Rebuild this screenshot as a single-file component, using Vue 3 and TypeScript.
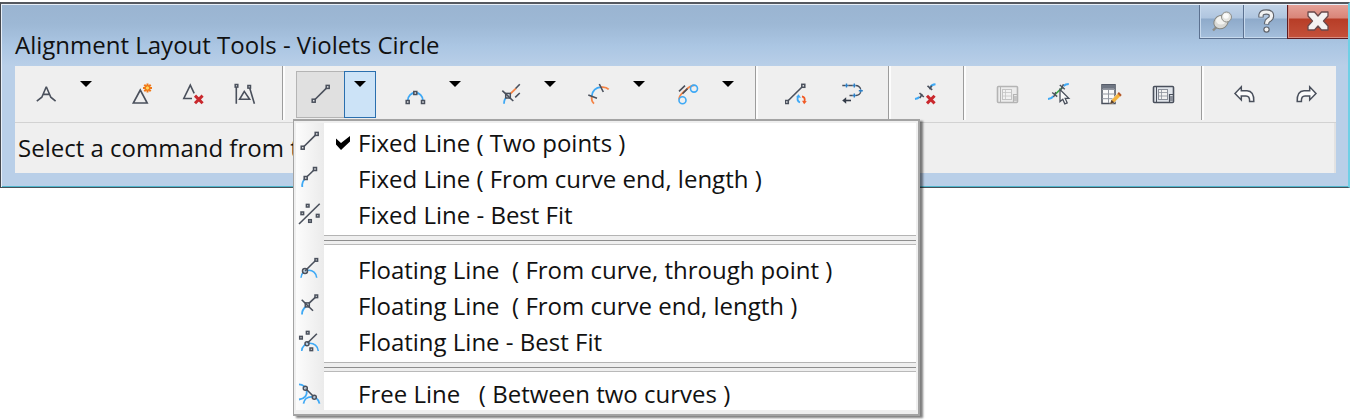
<script setup lang="ts">
import { ref } from 'vue'

interface Tool {
  icon: string
  label: string
  split?: boolean
  wide?: boolean
  menu?: boolean
  disabled?: boolean
}

interface Group {
  name: string
  tools: Tool[]
}

const ink = '#4a505c'
const blue = '#3fa9f5'
const orange = '#f58345'

const box = (x: number, y: number, s = 3) =>
  `<rect x="${x - s / 2}" y="${y - s / 2}" width="${s}" height="${s}" fill="#dfe1e4" stroke="${ink}" stroke-width="1.5"/>`
const dot = (x: number, y: number, r = 2) =>
  `<circle cx="${x}" cy="${y}" r="${r}" fill="#dfe1e4" fill-opacity="0.7" stroke="${ink}" stroke-width="1.5"/>`
const line = (d: string, color = ink, w = 1.6) =>
  `<path d="${d}" fill="none" stroke="${color}" stroke-width="${w}"/>`
const cross = (x: number, y: number) =>
  line(`M${x - 3.8} ${y - 3.8}L${x + 3.8} ${y + 3.8}M${x + 3.8} ${y - 3.8}L${x - 3.8} ${y + 3.8}`, '#c9282d', 3)

const sheet = (c: string, fill: string, inner: string) =>
  `<rect x="2.5" y="4.5" width="20" height="16" rx="1" fill="${fill}" stroke="${c}" stroke-width="1.6"/>` +
  `<path d="M5.5 5v15" stroke="${c}" stroke-width="1"/>` +
  `<rect x="7.5" y="7.5" width="9" height="10" fill="#f2f2f2" stroke="${inner}"/>` +
  `<path d="M7.5 10.5h9M7.5 14h9M10.5 7.5v10" stroke="${inner}" stroke-width="0.8"/>` +
  `<path d="M18.5 20v-7.5h4" fill="none" stroke="${c}" stroke-width="1.2"/><rect x="19" y="14" width="3" height="5" fill="${inner}"/>`

const undoPath =
  'M2 11.5L8.3 4.8V8.8H14C19 9 21 12 20.8 19.4H16.6C16.8 15.5 15.5 14 13 14H8.3V18Z'

const icons: Record<string, string> = {
  tangent: line('M12.3 4.8L7.8 15.2L2.8 19.2M12.3 4.8L16.8 15.2L21.6 19.2M9.2 12.4H15.4'),
  insertPi:
    line('M10.3 8L3.3 21H17.2Z') +
    `<path d="M17.5 1.5v9M13 6h9M14.3 2.8l6.4 6.4M20.7 2.8l-6.4 6.4" stroke="#f07818" stroke-width="2"/><circle cx="17.5" cy="6" r="2.1" fill="#ffd65a" stroke="#f07818"/>`,
  deletePi: line('M11 16.5H2.8L9.3 3.2L13.2 11.4') + cross(17.8, 17.4),
  breakPi:
    line('M4.3 4V21.8M17.4 5L22.4 21.8') + line('M12.3 9.4L7.6 17.3H17.6Z') + box(4.5, 3.8, 2.6) + box(17.2, 4.8, 2.6),
  line: line('M4.7 18.7L18.7 4.9') + box(4.7, 18.7) + box(18.7, 4.9),
  curve: line('M4.7 19C4.7 8 20 8 20 19', blue, 1.8) + box(4.7, 20) + box(12.3, 11) + box(20, 20),
  floatCurve:
    line('M10 14L18 6.3', orange, 1.8) + line('M17.6 6.5L21.8 2.2M17.2 15.4L21.8 11') +
    line('M9 15Q6 17 6 21.7', blue, 1.8) + box(10, 13.7, 4.6) + line('M4.3 8.7L15.3 19'),
  spiral:
    line('M4.8 14C5.5 9 9 5.5 14 5.2', blue, 1.8) + line('M14 5.2Q19 4.5 21.7 7.4M4.8 14Q4 19 7 21.7', orange, 1.8) +
    line('M1.3 13L10 16.3M12.3 2L16.3 10'),
  reverse:
    line('M3 17.5C3 13 6 11.5 9 8.7C12 5.8 14 3.5 18.4 3.4', orange, 1.8) + line('M6.5 11.8L11.5 6.6M3 9.3L9 3.6') +
    `<circle cx="6.5" cy="18.2" r="3.5" fill="none" stroke="${blue}" stroke-width="1.6"/><circle cx="18" cy="6.6" r="3.5" fill="none" stroke="${blue}" stroke-width="1.6"/>`,
  convert:
    line('M1.8 20L18.3 3.8') + box(1.8, 20) + box(18.3, 3.8) +
    line('M15 20.5Q11.5 19 13 14.8', blue, 1.8) + `<path d="M11 15.2l2.5-3 2.5 3.6z" fill="${blue}"/>` +
    line('M17 14.5Q20.5 15 19.5 19.5', '#f15a24', 1.8) + `<path d="M17 18.8l2.2 3.4 2.6-3z" fill="#f15a24"/>`,
  traverse:
    line('M2.3 3.5H5M8.2 3.5H12.8M15.6 3.5Q19.8 3.7 20.6 7.2M20.6 10.2Q19.8 13.3 16 13.5M12.8 13.5H9.5', ink, 1.4) +
    line('M5 3.5H8.2M12.8 3.5H15.6M12.8 13.5H16M20.7 7.2V10.2M6.5 1.5V5.5M14.3 1.5V5.5M18.8 8.7H22.8M14.3 11.5V15.5', '#2f7fc4', 1.4) +
    line('M5 18.5H11', '#343b48', 1.6) + '<path d="M2.2 18.5L6.2 15.3V21.7Z" fill="#343b48"/>',
  deleteSub:
    line('M1 17Q4 16.7 5.5 15M16.5 5Q17.5 2.5 21.5 2.2', blue, 2) +
    line('M5.5 11L9.8 15M8.2 12L5.8 16M13.5 3.8L18.2 7.8M17.8 3.8L15.5 7.2', ink, 1.6) + cross(16.8, 17.6),
  gridOff: sheet('#b4b4b4', '#ececec', '#c4c4c4'),
  pick:
    line('M1 17Q4.5 16.8 6.5 14M16.5 4Q18.5 2 21.8 2', blue, 2) + line('M7.5 13L16 4.8', '#39a845', 1.7) +
    line('M5.2 10.5L10.2 14.6M8.8 10L6.6 15M12.8 3L17.8 7.2M16.4 2.2L14.2 7.4', ink, 1.4) +
    `<path d="M13 7.5V19.6L15.8 17.2L17.8 21.8L20.2 20.8L18.2 16.4H21.8Z" fill="#fafafa" stroke="${ink}" stroke-width="1.3"/>`,
  table:
    `<rect x="3" y="2.8" width="13" height="18.7" fill="#fafafa" stroke="${ink}" stroke-width="1.5"/><rect x="3" y="2.8" width="13" height="4" fill="#6f7683"/>` +
    '<path d="M3 7.5h13M3 12h13M3 16.7h13M9.5 7v14" stroke="#9297a0" stroke-width="1"/>' +
    '<path d="M11 22.2l1.5-4.4 7-7.2 2.8 2.8-7 7.2z" fill="#f3b23c" stroke="#efefef" stroke-width="0.6"/><path d="M11 22.2l1.5-4.4 2.8 2.8z" fill="#5a4130"/><path d="M18.5 11.6l1.4-1.5 2.8 2.8-1.4 1.5z" fill="#b3562a"/>',
  grid: sheet(ink, '#e0e4ea', '#8b909a'),
  undo: `<path d="${undoPath}" fill="#fbfbfb" stroke="${ink}" stroke-width="1.5"/>`,
  redo: `<path transform="matrix(-1 0 0 1 24 0)" d="${undoPath}" fill="#fbfbfb" stroke="${ink}" stroke-width="1.5"/>`,
  lineFromCurve: line('M7.7 13L17 4') + line('M7 13.8Q3.6 17 4.3 22', blue, 1.8) + box(7.7, 13) + box(17, 4),
  lineFit: line('M1 23L21.7 2.7') + box(9.7, 4.7, 2.6) + box(4.3, 12.3, 2.6) + box(19.7, 14.7, 2.6) + box(12, 20, 2.6),
  floatThrough: line('M3 21.8C3.5 12 18 11.5 18.7 21.8', blue, 1.6) + dot(7, 15, 2.5) + line('M7 15L18.3 3.7') + box(18.3, 3.9, 2.6),
  floatEnd: line('M8 14.5Q4 17.5 4 22.4', blue, 1.8) + line('M9.3 12.9L18.3 4.3') + box(9.3, 12.9, 4) + line('M3.7 7.7L15 18.7') + box(18.3, 4.3, 2.6),
  floatFit:
    line('M3.7 23C4 13 19.5 12.5 20.3 23', blue, 1.6) + dot(9, 15.7) + line('M9.5 15L18.9 5.7') +
    box(9.7, 4.7, 2.6) + box(3, 9.7, 2.6) + box(13.3, 21.3, 2.6),
  freeLine:
    line('M1 4.3Q7 4.6 8.8 10.5Q9.5 18.5 1 19.5M5.5 23.6C6.5 15 19.5 14 21.5 23.6', blue, 1.8) +
    line('M7.3 8.3L16.3 17.3') + dot(7.3, 8.3) + dot(16.3, 17.3),
}

const groups: Group[] = [
  {
    name: 'points',
    tools: [
      { icon: 'tangent', label: 'Tangent', split: true, wide: true },
      { icon: 'insertPi', label: 'Insert PI' },
      { icon: 'deletePi', label: 'Delete PI' },
      { icon: 'breakPi', label: 'Break-apart PI' },
    ],
  },
  {
    name: 'entities',
    tools: [
      { icon: 'line', label: 'Fixed line', split: true, wide: true, menu: true },
      { icon: 'curve', label: 'Curve', split: true, wide: true },
      { icon: 'floatCurve', label: 'Line with spiral', split: true },
      { icon: 'spiral', label: 'Curve with spiral', split: true },
      { icon: 'reverse', label: 'Spiral', split: true },
    ],
  },
  {
    name: 'convert',
    tools: [
      { icon: 'convert', label: 'Convert line' },
      { icon: 'traverse', label: 'Reverse direction' },
    ],
  },
  { name: 'remove', tools: [{ icon: 'deleteSub', label: 'Delete sub-entity' }] },
  {
    name: 'params',
    tools: [
      { icon: 'gridOff', label: 'Edit best fit data', disabled: true },
      { icon: 'pick', label: 'Pick sub-entity' },
      { icon: 'table', label: 'Sub-entity editor' },
      { icon: 'grid', label: 'Alignment grid view' },
    ],
  },
  {
    name: 'history',
    tools: [
      { icon: 'undo', label: 'Undo' },
      { icon: 'redo', label: 'Redo' },
    ],
  },
]

const sections = [
  [
    { icon: 'line', text: 'Fixed Line ( Two points )' },
    { icon: 'lineFromCurve', text: 'Fixed Line ( From curve end, length )' },
    { icon: 'lineFit', text: 'Fixed Line - Best Fit' },
  ],
  [
    { icon: 'floatThrough', text: 'Floating Line  ( From curve, through point )' },
    { icon: 'floatEnd', text: 'Floating Line  ( From curve end, length )' },
    { icon: 'floatFit', text: 'Floating Line - Best Fit' },
  ],
  [{ icon: 'freeLine', text: 'Free Line   ( Between two curves )' }],
]

const open = ref(true)
const selected = ref('line')

function choose(icon: string) {
  selected.value = icon
  open.value = false
}
</script>

<template>
  <main class="desktop">
    <section class="window" aria-label="Alignment Layout Tools">
      <header class="titlebar">
        <h1 class="title">Alignment Layout Tools - Violets Circle</h1>
        <div class="caption">
          <button class="cap" type="button" aria-label="Pin">
            <svg width="24" height="24" viewBox="0 0 24 24">
              <path d="M3 21.5L9 15.5" stroke="#8d8d88" stroke-width="2.4" />
              <ellipse cx="11" cy="13" rx="7.5" ry="6.5" transform="rotate(-35 11 13)" fill="#d9d9d5" stroke="#85857f" />
              <ellipse cx="11" cy="11.5" rx="5" ry="4" fill="#f3f3f0" />
              <circle cx="16.5" cy="8" r="5" fill="#e4e4e0" stroke="#85857f" stroke-width="0.9" />
              <circle cx="16" cy="7" r="2.8" fill="#fbfbfa" />
            </svg>
          </button>
          <button class="cap" type="button" aria-label="Help">
            <svg width="24" height="24" viewBox="0 0 24 24" fill="none">
              <path d="M7 8.5V6Q7.5 3 12.3 3Q17.5 3 17.5 7Q17.5 9.5 14.5 11Q12.7 12 12.5 15.5" stroke="#60646c" stroke-width="5.4" />
              <circle cx="12.5" cy="20.6" r="3.2" fill="#60646c" />
              <path d="M7 7.8V6Q7.5 3 12.3 3Q17.5 3 17.5 7Q17.5 9.5 14.5 11Q12.7 12 12.5 14.8" stroke="#f2f2f2" stroke-width="3.2" />
              <circle cx="12.5" cy="20.6" r="2" fill="#f2f2f2" />
            </svg>
          </button>
          <button class="cap close" type="button" aria-label="Close">
            <svg width="24" height="24" viewBox="0 0 24 24">
              <path d="M2 3H8.5L12 7L15.5 3H22V7L17.5 12L22 17V21H15.5L12 17L8.5 21H2V17L6.5 12L2 7Z" fill="#f4f2f2" stroke="#6a4a4c" stroke-width="1.3" stroke-linejoin="round" />
            </svg>
          </button>
        </div>
      </header>

      <div class="client">
        <div class="toolbar" role="toolbar" aria-label="Layout tools">
          <div v-for="g in groups" :key="g.name" class="group" :class="g.name">
            <div
              v-for="t in g.tools"
              :key="t.icon"
              class="tool"
              :class="{ wide: t.wide, open: t.menu && open }"
            >
              <button class="main" type="button" :aria-label="t.label" :disabled="t.disabled">
                <svg width="24" height="24" viewBox="0 0 24 24" v-html="icons[t.icon]"></svg>
              </button>
              <button
                v-if="t.split"
                class="drop"
                type="button"
                :aria-label="t.label + ' options'"
                :aria-expanded="t.menu ? open : false"
                @click="t.menu && (open = !open)"
              >
                <svg width="12" height="6" viewBox="0 0 12 6"><path d="M0 0H12L6 6Z" fill="#000" /></svg>
              </button>

              <div v-if="t.menu && open" class="menu" role="menu">
                <div class="sheet">
                  <div v-for="(s, i) in sections" :key="i" class="section" role="group">
                    <button
                      v-for="m in s"
                      :key="m.icon"
                      class="item"
                      type="button"
                      role="menuitemradio"
                      :aria-checked="selected === m.icon"
                      @click="choose(m.icon)"
                    >
                      <svg class="glyph" width="24" height="24" viewBox="0 0 24 24" v-html="icons[m.icon]"></svg>
                      <span class="check">
                        <svg v-if="selected === m.icon" width="16" height="16" viewBox="0 0 16 16">
                          <path d="M1 3.5L6 8L15 1V6.5L6 15L1 9.5Z" fill="#000" />
                        </svg>
                      </span>
                      <span class="text">{{ m.text }}</span>
                    </button>
                  </div>
                </div>
              </div>
            </div>
          </div>
        </div>
        <div class="status" role="status">Select a command from the</div>
      </div>
    </section>
  </main>
</template>

<style>
body {
  background: #fff;
}
</style>

<style scoped>
.desktop {
  min-height: 100vh;
  padding-top: 2px;
}
.desktop,
.desktop * {
  box-sizing: border-box;
}
.window {
  padding: 0 12px 14px 13px;
  border-top: 2px solid #55585f;
  border-left: 1px solid #45484e;
  border-right: 2px solid #6fd0e6;
  border-bottom: 1px solid #45525a;
  box-shadow: inset 1px 1px #e8eff8, inset 0 -1px #4fb5cc;
  background: linear-gradient(#9ab4d1 0, #9db8d5 20px, #abc6e3 42px, #b9cfe8 62px);
  font-family: "Open Sans", "Noto Sans", sans-serif;
  font-size: 24px;
  color: #111;
}
.window button {
  margin: 0;
  padding: 0;
  border: 0;
  background: none;
  font: inherit;
  color: inherit;
}
.window svg {
  display: block;
  flex: none;
}
.titlebar {
  display: flex;
  justify-content: space-between;
  align-items: flex-start;
  height: 62px;
  margin-right: -12px;
}
.title {
  margin: 24px 0 0 1px;
  font-size: 24px;
  font-weight: 400;
  line-height: 34px;
  white-space: nowrap;
}
.caption {
  display: flex;
  margin-top: 1px;
}
.window .cap {
  display: flex;
  justify-content: center;
  align-items: center;
  width: 44px;
  height: 34px;
  padding-bottom: 2px;
  border-left: 1px solid #5c7190;
  border-bottom: 1px solid #5c7190;
  box-shadow: inset 1px -1px #c8daee;
  background: linear-gradient(#c2d4e8 0, #afc5df 13px, #8eaaca 14px, #a5bfdc 100%);
}
.window .close {
  width: 61px;
  border-color: #5e1b20;
  box-shadow: inset 1px -1px #d98c80;
  background: linear-gradient(#e5a197 0, #d98578 13px, #b73d27 14px, #c4513b 100%);
}
.client {
  margin-left: 1px;
  background: #efefef;
}
.toolbar {
  display: flex;
  height: 56px;
}
.group {
  display: flex;
  flex: none;
  height: 54px;
  padding-top: 5px;
  border-left: 1px solid #9c9c9c;
  box-shadow: inset 2px 0 #fcfcfc;
}
.points {
  gap: 3px;
  padding-left: 7px;
  padding-right: 14px;
  border-left: 0;
  box-shadow: none;
}
.points .wide {
  margin-right: 13px;
}
.entities {
  gap: 9px;
  padding-left: 13px;
  padding-right: 11px;
}
.entities .wide {
  margin-right: 6px;
}
.convert {
  gap: 7px;
  padding-left: 17px;
  padding-right: 12px;
}
.remove {
  padding-left: 13px;
  padding-right: 13px;
}
.params {
  gap: 4px;
  padding-left: 19px;
  padding-right: 14px;
}
.history {
  flex: 1 1 auto;
  gap: 13px;
  padding-left: 19px;
}
.tool {
  position: relative;
  display: flex;
  height: 47px;
}
.window .main,
.window .drop {
  display: flex;
  justify-content: center;
  align-items: flex-start;
  width: 48px;
  height: 47px;
  padding-top: 10px;
  border: 1px solid transparent;
}
.window .drop {
  width: 32px;
  padding-top: 9px;
}
.window .open .main {
  border-color: #b4b4b4;
  border-right: 0;
  background: #e0e0e0;
}
.window .open .drop {
  border-color: #2a6fae;
  background: #cce3f7;
}
.menu {
  position: absolute;
  z-index: 2;
  top: 48px;
  left: -3px;
  width: 627px;
  padding: 2px 2px 4px;
  border: 2px solid #a3a3a3;
  border-left-width: 1px;
  background: #efefef;
  box-shadow: 3px 2px 2px rgba(0, 0, 0, 0.5);
}
.sheet {
  background: linear-gradient(90deg, #fcfcfc, #ebebeb 28px, #fff 28px);
}
.section {
  padding-top: 4px;
}
.section + .section {
  padding-top: 19px;
  background: linear-gradient(#b4b4b4 0, #b4b4b4 1px, #efefef 1px, #efefef 5px, #8e8e8e 5px, #8e8e8e 6px, #efefef 6px, #efefef 9px, #b9b9b9 9px, #b9b9b9 10px, #fff 10px) 28px 0 / 100% 11px no-repeat;
}
.section + .section:last-child {
  padding-top: 16px;
}
.window .item {
  display: flex;
  align-items: flex-start;
  width: 100%;
  height: 36px;
  text-align: left;
}
.window .section:last-child .item {
  height: 32px;
}
.glyph {
  margin: 2px 2px 0;
}
.check {
  width: 34px;
  padding: 8px 0 0 11px;
}
.text {
  white-space: pre;
  line-height: 32px;
}
.status {
  height: 51px;
  padding: 8px 3px;
  border-top: 1px solid #d2d2d2;
  box-shadow: inset -2px 0 #e2e2e2;
  line-height: 34px;
  white-space: nowrap;
}
</style>
